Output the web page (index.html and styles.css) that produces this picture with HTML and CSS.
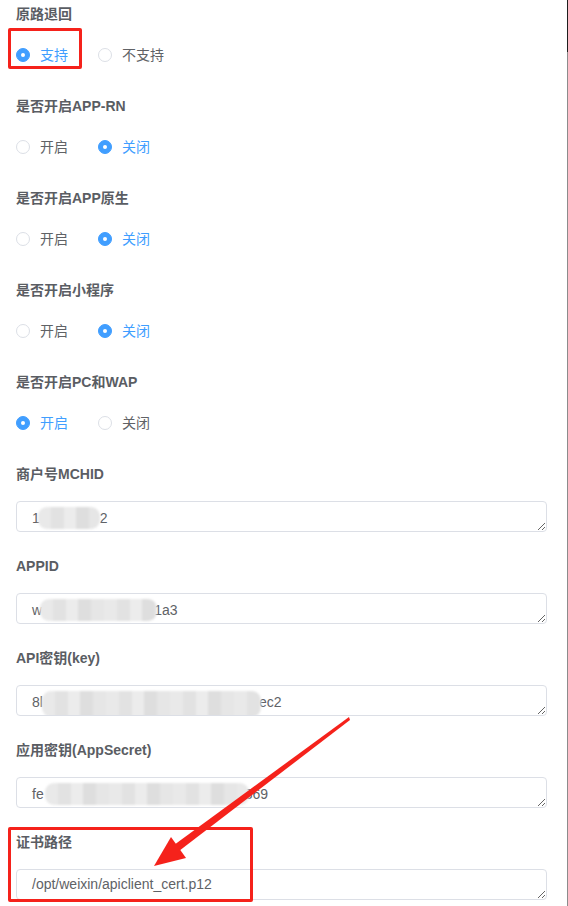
FILE: index.html
```html
<!DOCTYPE html>
<html>
<head>
    <meta charset="UTF-8">
    <meta name="viewport" content="width=device-width, initial-scale=1.0">
    <title>支付配置</title>
    <link rel="stylesheet" href="styles.css">
</head>
<body>

    <div class="page">
        <form class="form">
            <!-- 开关项 -->
            <div class="item">
                <div class="label">原路退回</div>
                <div class="radios">
                    <label class="radio checked"><span class="dot"></span><span class="text">支持</span></label>
                    <label class="radio"><span class="dot"></span><span class="text">不支持</span></label>
                </div>
            </div>

            <div class="item">
                <div class="label">是否开启APP-RN</div>
                <div class="radios">
                    <label class="radio"><span class="dot"></span><span class="text">开启</span></label>
                    <label class="radio checked"><span class="dot"></span><span class="text">关闭</span></label>
                </div>
            </div>

            <div class="item">
                <div class="label">是否开启APP原生</div>
                <div class="radios">
                    <label class="radio"><span class="dot"></span><span class="text">开启</span></label>
                    <label class="radio checked"><span class="dot"></span><span class="text">关闭</span></label>
                </div>
            </div>

            <div class="item">
                <div class="label">是否开启小程序</div>
                <div class="radios">
                    <label class="radio"><span class="dot"></span><span class="text">开启</span></label>
                    <label class="radio checked"><span class="dot"></span><span class="text">关闭</span></label>
                </div>
            </div>

            <div class="item">
                <div class="label">是否开启PC和WAP</div>
                <div class="radios">
                    <label class="radio checked"><span class="dot"></span><span class="text">开启</span></label>
                    <label class="radio"><span class="dot"></span><span class="text">关闭</span></label>
                </div>
            </div>

            <!-- 文本项 -->
            <div class="item item-text">
                <div class="label">商户号MCHID</div>
                <div class="field">1<span class="blur blur-mchid"></span>2</div>
            </div>

            <div class="item item-text">
                <div class="label">APPID</div>
                <div class="field">w<span class="blur blur-appid"></span>1a3</div>
            </div>

            <div class="item item-text">
                <div class="label">API密钥(key)</div>
                <div class="field">8l<span class="blur blur-key"></span>ec2</div>
            </div>

            <div class="item item-text">
                <div class="label">应用密钥(AppSecret)</div>
                <div class="field">fe<span class="blur blur-secret"></span>369</div>
            </div>

            <div class="item item-text">
                <div class="label">证书路径</div>
                <div class="field">/opt/weixin/apiclient_cert.p12</div>
            </div>
        </form>

        <!-- 标注 -->
        <div class="mark mark-radio"></div>
        <div class="mark mark-cert"></div>
        <svg class="arrow" width="568" height="906" viewBox="0 0 568 906">
            <polygon points="349,717 350,720 179,851 174,845" fill="#f5221b"/>
            <polygon points="154,866 171,837 186,858" fill="#f5221b"/>
        </svg>
    </div>

</body>
</html>
```

FILE: styles.css
```css
* {
    margin: 0;
    padding: 0;
    box-sizing: border-box;
}

body {
    background: #fff;
    overflow: hidden;
    font-family: "Liberation Sans", Arial, "Noto Sans CJK SC", sans-serif;
    font-size: 14px;
    color: #606266;
}

.page {
    position: relative;
    width: 568px;
    height: 906px;
    border-right: 1px solid #8c8c8c;
}

.page::before {
    content: "";
    position: absolute;
    top: 0;
    right: -1px;
    width: 1px;
    height: 52px;
    background: #1e1e1e;
}

.form {
    padding: 4px 20px 0 16px;
}

.item {
    margin-bottom: 31px;
}

.label {
    height: 20px;
    line-height: 20px;
    font-weight: bold;
    color: #5a5d63;
}

.radios {
    display: flex;
    align-items: center;
    height: 20px;
    margin-top: 21px;
}

.radio {
    display: flex;
    align-items: center;
    margin-right: 30px;
    cursor: pointer;
}

.dot {
    position: relative;
    width: 14px;
    height: 14px;
    border: 1px solid #dcdfe6;
    border-radius: 50%;
    background: #fff;
}

.text {
    padding-left: 10px;
    line-height: 20px;
}

.checked .dot {
    background: #409eff;
    border-color: #409eff;
}

.checked .dot::after {
    content: "";
    position: absolute;
    left: 4px;
    top: 4px;
    width: 4px;
    height: 4px;
    border-radius: 50%;
    background: #fff;
}

.checked .text {
    color: #409eff;
}

.item-text {
    margin-bottom: 24px;
}

.field {
    margin-top: 17px;
    height: 31px;
    padding: 5px 15px;
    line-height: 19px;
    border: 1px solid #dcdfe6;
    border-radius: 4px;
    color: #606266;
    white-space: nowrap;
    overflow: hidden;
    resize: vertical;
}

.blur {
    display: inline-block;
    height: 22px;
    vertical-align: -6px;
    border-radius: 9px;
    background:
        repeating-linear-gradient(90deg, #e9e9e9 0 13px, #e2e2e2 13px 26px, #ececec 26px 38px, #dedede 38px 51px, #e6e6e6 51px 64px);
    filter: blur(0.8px);
}

.blur-mchid {
    width: 62px;
    margin-left: -2px;
}

.blur-appid {
    width: 117px;
    margin-left: -2px;
    margin-right: -3px;
}

.blur-key {
    width: 219px;
    margin-left: -1px;
    margin-right: -2px;
    height: 26px;
    vertical-align: -10px;
}

.blur-secret {
    width: 204px;
    margin-left: 1px;
    margin-right: -4px;
}

.mark {
    position: absolute;
    border: 3px solid #f5221b;
    border-radius: 2px;
}

.mark-radio {
    left: 8px;
    top: 28px;
    width: 74px;
    height: 41px;
}

.mark-cert {
    left: 8px;
    top: 827px;
    width: 245px;
    height: 75px;
}

.arrow {
    position: absolute;
    left: 0;
    top: 0;
    pointer-events: none;
}
```
